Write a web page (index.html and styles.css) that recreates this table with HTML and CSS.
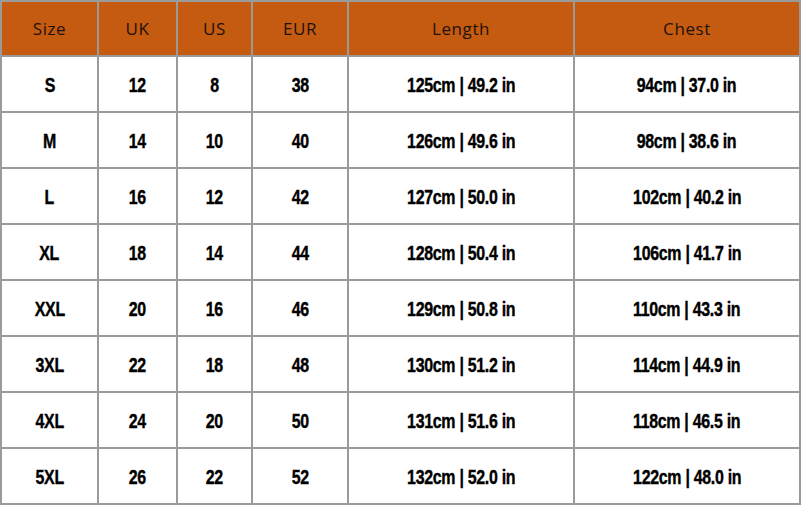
FILE: index.html
```html
<!DOCTYPE html>
<html>
<head>
<meta charset="utf-8">
<link rel="stylesheet" href="styles.css">
</head>
<body>
<div class="chart">
  <div class="cell head">Size</div><div class="cell head">UK</div><div class="cell head">US</div><div class="cell head">EUR</div><div class="cell head">Length</div><div class="cell head">Chest</div>
  <div class="cell"><span class="v">S</span></div><div class="cell"><span class="v">12</span></div><div class="cell"><span class="v">8</span></div><div class="cell"><span class="v">38</span></div><div class="cell"><span class="v">125cm | 49.2 in</span></div><div class="cell"><span class="v">94cm | 37.0 in</span></div>
  <div class="cell"><span class="v">M</span></div><div class="cell"><span class="v">14</span></div><div class="cell"><span class="v">10</span></div><div class="cell"><span class="v">40</span></div><div class="cell"><span class="v">126cm | 49.6 in</span></div><div class="cell"><span class="v">98cm | 38.6 in</span></div>
  <div class="cell"><span class="v">L</span></div><div class="cell"><span class="v">16</span></div><div class="cell"><span class="v">12</span></div><div class="cell"><span class="v">42</span></div><div class="cell"><span class="v">127cm | 50.0 in</span></div><div class="cell"><span class="v">102cm | 40.2 in</span></div>
  <div class="cell"><span class="v">XL</span></div><div class="cell"><span class="v">18</span></div><div class="cell"><span class="v">14</span></div><div class="cell"><span class="v">44</span></div><div class="cell"><span class="v">128cm | 50.4 in</span></div><div class="cell"><span class="v">106cm | 41.7 in</span></div>
  <div class="cell"><span class="v">XXL</span></div><div class="cell"><span class="v">20</span></div><div class="cell"><span class="v">16</span></div><div class="cell"><span class="v">46</span></div><div class="cell"><span class="v">129cm | 50.8 in</span></div><div class="cell"><span class="v">110cm | 43.3 in</span></div>
  <div class="cell"><span class="v">3XL</span></div><div class="cell"><span class="v">22</span></div><div class="cell"><span class="v">18</span></div><div class="cell"><span class="v">48</span></div><div class="cell"><span class="v">130cm | 51.2 in</span></div><div class="cell"><span class="v">114cm | 44.9 in</span></div>
  <div class="cell"><span class="v">4XL</span></div><div class="cell"><span class="v">24</span></div><div class="cell"><span class="v">20</span></div><div class="cell"><span class="v">50</span></div><div class="cell"><span class="v">131cm | 51.6 in</span></div><div class="cell"><span class="v">118cm | 46.5 in</span></div>
  <div class="cell"><span class="v">5XL</span></div><div class="cell"><span class="v">26</span></div><div class="cell"><span class="v">22</span></div><div class="cell"><span class="v">52</span></div><div class="cell"><span class="v">132cm | 52.0 in</span></div><div class="cell"><span class="v">122cm | 48.0 in</span></div>
</div>
</body>
</html>
```
FILE: styles.css
```css
html, body {
  margin: 0;
  padding: 0;
  background: #ffffff;
}
.chart {
  width: 797px;
  display: grid;
  grid-template-columns: 95px 77px 73px 94px 224px 224px;
  grid-template-rows: 53px repeat(8, 54px);
  gap: 2px;
  padding: 2px;
  background: #9a9a9a;
}
.cell {
  background: #ffffff;
  display: flex;
  align-items: center;
  justify-content: center;
  font-family: "Liberation Sans", Arial, sans-serif;
  font-weight: 700;
  font-size: 21px;
  color: #000000;
  padding-top: 2px;
  box-sizing: border-box;
}
.v {
  display: inline-block;
  transform: scaleX(0.76);
  white-space: nowrap;
  letter-spacing: -0.4px;
  -webkit-text-stroke: 0.4px #000;
}
.cell.head {
  background: #c55a11;
  font-family: "Open Sans", "DejaVu Sans", sans-serif;
  font-weight: 400;
  font-size: 17px;
  color: #1e1208;
  letter-spacing: 0.6px;
  padding-top: 0;
}
```
